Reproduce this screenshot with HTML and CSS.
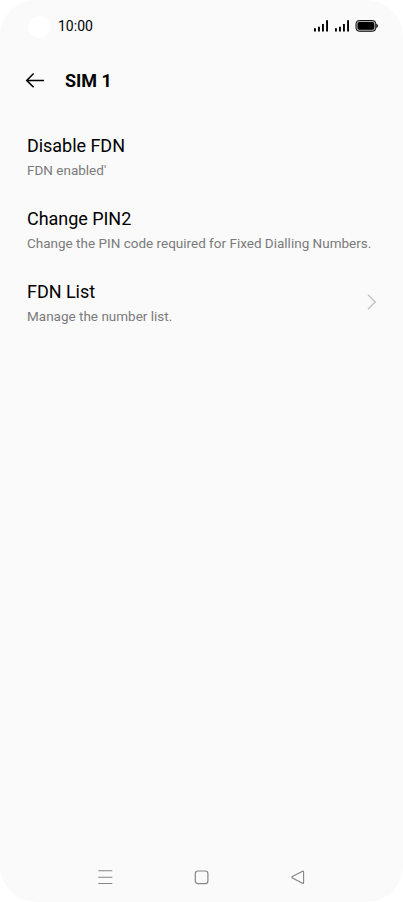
FILE: index.html
```html
<!DOCTYPE html>
<html lang="en">
<head>
<meta charset="utf-8">
<title>SIM 1</title>
<link rel="stylesheet" href="styles.css">
</head>
<body>
<div class="screen">
  <div class="status">
    <span class="camera"></span>
    <span class="time">10:00</span>
    <svg class="signals" width="66" height="14" viewBox="0 0 66 14">
      <g id="bars"><path d="M1 9.3h1.9v3.2H1zM5 7.8h1.9v4.7H5zM9 5h1.9v7.5H9zM13.1 1.2H15v11.3h-1.9z"/></g>
      <use href="#bars" x="21"/>
      <rect x="43" y="1.5" width="19.8" height="10.8" rx="3.2" fill="#aaa" stroke="#111" stroke-width="1"/>
      <rect x="44.6" y="3" width="16.6" height="7.8" rx="1.8"/>
      <path d="M63.3 4.8q1.6.5 1.6 2.1t-1.6 2.1z"/>
    </svg>
  </div>
  <header class="header">
    <svg width="20" height="16" viewBox="0 0 20 16" fill="none" stroke="#000" stroke-width="1.5"><path d="M19 8.4H1.8M8.6 1.5 1.7 8.4l6.9 6.9"/></svg>
    <h1>SIM 1</h1>
  </header>
  <main class="list">
    <div class="item"><div><h2>Disable FDN</h2><p>FDN enabled'</p></div></div>
    <div class="item"><div><h2>Change PIN2</h2><p>Change the PIN code required for Fixed Dialling Numbers.</p></div></div>
    <div class="item"><div><h2>FDN List</h2><p>Manage the number list.</p></div>
      <svg class="chevron" width="10" height="16" viewBox="0 0 10 16" fill="none" stroke="#c4c4c4" stroke-width="1.5"><path d="M1 .8 8.2 8 1 15.2"/></svg>
    </div>
  </main>
  <nav class="nav">
    <svg width="16" height="16" viewBox="0 0 16 16" fill="none" stroke="#858585" stroke-width="1.1"><path d="M1.3 1.8h14M1.3 8.2h14M1.3 14.5h14"/></svg>
    <svg width="16" height="16" viewBox="0 0 16 16" fill="none" stroke="#858585" stroke-width="1.2"><rect x="1.3" y="2" width="12.6" height="12.6" rx="2.6"/></svg>
    <svg width="16" height="16" viewBox="0 0 16 16" fill="none" stroke="#858585" stroke-width="1.1"><path d="M13.6 2.9v10.8q0 1.2-1 .6L2.4 9.1q-1.1-.8 0-1.6L12.6 2.3q1-.6 1 .6z"/></svg>
  </nav>
</div>
</body>
</html>
```
FILE: styles.css
```css
* { box-sizing: border-box; margin: 0; }
body { background: #fff; font-family: Roboto, sans-serif; color: #000; }
.screen { width: 403px; height: 902px; background: #fafafa; border-radius: 36px; display: flex; flex-direction: column; overflow: hidden; }
.status { height: 52px; padding: 0 24px 0 28px; display: flex; align-items: center; }
.camera { width: 22px; height: 22px; border-radius: 50%; background: #fff; margin-top: 2px; }
.time { margin-left: 8px; font-size: 14px; line-height: 20px; }
.signals { margin-left: auto; }
.header { height: 56px; padding-left: 25px; display: flex; align-items: center; gap: 20px; }
.header h1 { font-size: 18px; line-height: 24px; font-weight: 700; padding-top: 2px; }
.list { padding: 25px 26px 0 27px; }
.item { height: 73px; display: flex; justify-content: space-between; }
.item h2 { font-size: 18px; font-weight: 400; line-height: 26px; letter-spacing: -.04px; }
.item p { font-size: 13.5px; line-height: 20px; margin-top: 1px; color: #7a7a7a; white-space: nowrap; }
.chevron { margin-top: 15px; }
.nav { margin-top: auto; height: 50px; padding: 0 97px; display: flex; justify-content: space-between; align-items: center; }
```
